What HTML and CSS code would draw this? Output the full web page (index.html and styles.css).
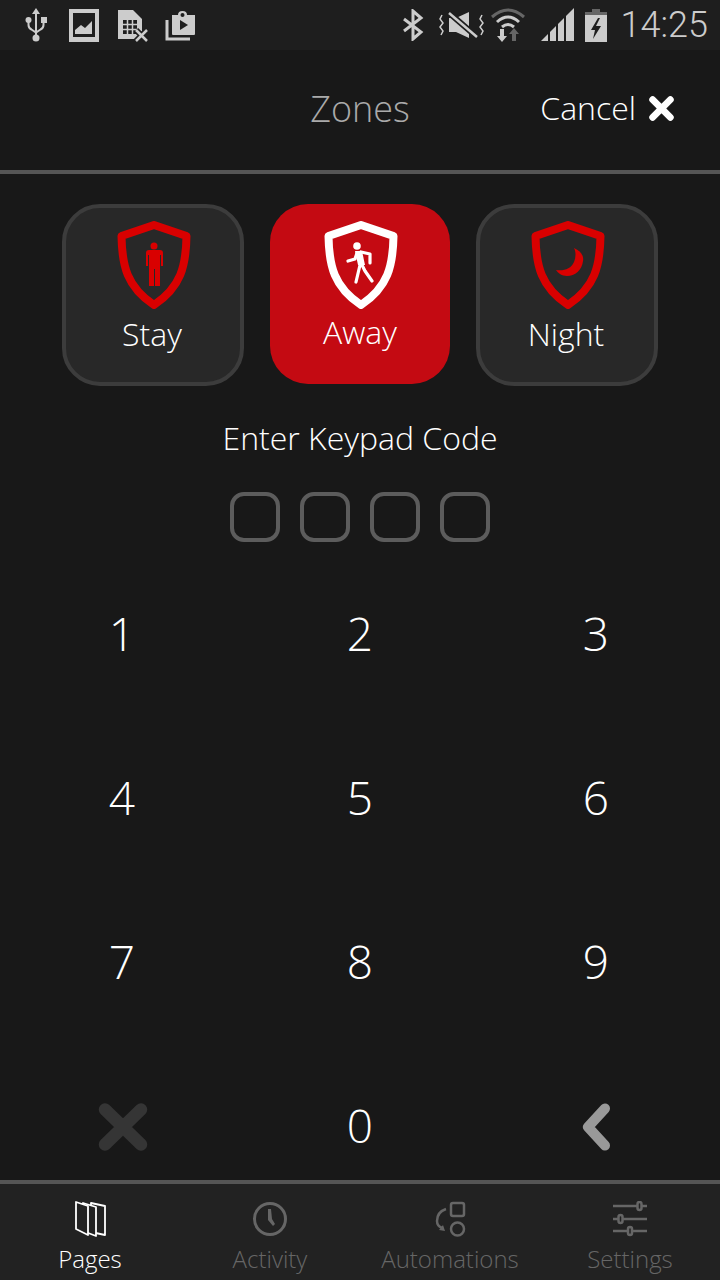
FILE: index.html
```html
<!DOCTYPE html>
<html lang="en">
<head>
    <meta charset="UTF-8">
    <meta name="viewport" content="width=device-width, initial-scale=1.0">
    <title>Zones</title>
    <link rel="stylesheet" href="styles.css">
</head>
<body>

    <!-- Status bar -->
    <div class="statusbar">
        <div class="status-left">
            <svg class="usb-icon" width="24" height="36" viewBox="0 0 24 36"><g fill="#ccc" stroke="none"><path d="M12 1l4 6h-3v21h-2V7H8z"/><circle cx="12" cy="31" r="3.500"/><circle cx="4.500" cy="13" r="3"/><rect x="17" y="10" width="6" height="6"/></g><path d="M4.500 14v4q0 3 3 4.500l4.500 3 4.500-3q3-1.500 3-4.500v-4" fill="none" stroke="#ccc" stroke-width="2"/></svg>
            <svg class="gallery-icon" width="30" height="33" viewBox="0 0 30 33"><rect width="30" height="33" fill="#ccc"/><rect x="4" y="4" width="22" height="24" fill="#1e1e1e"/><path d="M6 25v-4l6-5 4 3 7-7v13z" fill="#ccc"/></svg>
            <svg class="sim-icon" width="31" height="33" viewBox="0 0 31 33"><path d="M0 1h15l9 9v20H0z" fill="#ccc"/><rect x="5" y="11" width="14" height="14" fill="#1e1e1e"/><path d="M9.500 11v14M14.500 11v14M5 15.500h14M5 20.500h14" stroke="#ccc" stroke-width="1.500"/><path d="M18 21l11 11M29 21L18 32" stroke="#1e1e1e" stroke-width="6"/><path d="M18 21l11 11M29 21L18 32" stroke="#ccc" stroke-width="2.500"/></svg>
            <svg class="store-icon" width="31" height="31" viewBox="0 0 31 31"><path d="M2 10v19h23" fill="none" stroke="#ccc" stroke-width="3"/><path d="M7 5h6q0-4 4.500-4t4.500 4h8v19q0 1-1 1H8q-1 0-1-1z" fill="#ccc"/><circle cx="17.500" cy="5" r="2" fill="#1e1e1e"/><path d="M15 10l8 5-8 5z" fill="#1e1e1e"/></svg>
        </div>
        <div class="status-right">
            <svg class="bt-icon" width="22" height="32" viewBox="0 0 22 32"><path d="M2 10l17 13-8 7V2l8 7L2 22" fill="none" stroke="#ccc" stroke-width="3"/></svg>
            <svg class="mute-icon" width="46" height="28" viewBox="0 0 46 28"><path d="M10 7h7l13-6v26l-13-6h-7z" fill="#ccc"/><path d="M9 1l29 25" stroke="#1e1e1e" stroke-width="6"/><path d="M10 2l28 24" stroke="#ccc" stroke-width="2.500"/><path d="M3 4L1 8l3 4-3 4 3 4-2 4M43 4l-2 4 3 4-3 4 3 4-2 4" fill="none" stroke="#ccc" stroke-width="1.500"/></svg>
            <svg class="wifi-icon" width="34" height="36" viewBox="0 0 34 36"><path d="M1 10Q17-4 33 10" fill="none" stroke="#666" stroke-width="3"/><path d="M6 15Q17 5 28 15" fill="none" stroke="#ccc" stroke-width="3"/><path d="M11 20q6-5 12 0" fill="none" stroke="#ccc" stroke-width="3"/><path d="M11 35l-5-6h3v-7h4v7h3z" fill="#ccc"/><path d="M23 21l5 6h-3v7h-4v-7h-3z" fill="#666"/></svg>
            <svg class="signal-icon" width="34" height="34" viewBox="0 0 34 34"><path d="M0 33L33 0v33z" fill="#ccc"/><path d="M8 18v16M16 10v24M24 2v32" stroke="#1e1e1e" stroke-width="2"/></svg>
            <svg class="battery-icon" width="22" height="33" viewBox="0 0 22 33"><path d="M7 0h8v3h7v6H0V3h7z" fill="#666"/><path d="M0 6h22v27H0z" fill="#ccc"/><path d="M13 9L6 21h4l-2 9 8-13h-5l4-8z" fill="#1e1e1e"/></svg>
            <span class="clock">14:25</span>
        </div>
    </div>

    <!-- Title -->
    <div class="titlebar">
        <span class="title">Zones</span>
        <div class="cancel">
            <span>Cancel</span>
            <svg width="25" height="25" viewBox="0 0 24 24"><path d="M3.500 3.500l17 17M20.500 3.500l-17 17" stroke="#fff" stroke-width="6.500" stroke-linecap="round"/></svg>
        </div>
    </div>

    <!-- Arming modes -->
    <div class="modes">
        <div class="mode">
            <svg width="74" height="88" viewBox="0 0 74 88"><path d="M37 4L69.500 15C69 45 64 66 37 84 10 66 5 45 4.500 15z" fill="none" stroke="#d90000" stroke-width="8" stroke-linejoin="round"/><circle cx="37" cy="25" r="3.500" fill="#d90000"/><path d="M32 29h11q3 0 3 3v13h-2V34h-1v31h-5V48h-1v17h-5V34h-1v11h-2V32q0-3 3-3z" fill="#d90000"/></svg>
            <span>Stay</span>
        </div>
        <div class="mode mode-active">
            <svg width="74" height="88" viewBox="0 0 74 88"><path d="M37 4L69.500 15C69 45 64 66 37 84 10 66 5 45 4.500 15z" fill="none" stroke="#fff" stroke-width="8" stroke-linejoin="round"/><circle cx="33" cy="25" r="3.800" fill="#fff"/><path d="M31 30h7l3 14h-7z" fill="#fff"/><path d="M24 40l7-2 2-6M37 31l9 2v9M36 44l-4 17M38 44l3 6 7 10" fill="none" stroke="#fff" stroke-width="3.200" stroke-linecap="round" stroke-linejoin="round"/></svg>
            <span>Away</span>
        </div>
        <div class="mode">
            <svg width="74" height="88" viewBox="0 0 74 88"><path d="M37 4L69.500 15C69 45 64 66 37 84 10 66 5 45 4.500 15z" fill="none" stroke="#d90000" stroke-width="8" stroke-linejoin="round"/><path d="M43 27C50 30 53 35 52 40 51 49 44 55 36 55 31 55 27 52 25 49 33 50 40 48 43 41 45 36 45 31 43 27z" fill="#d90000"/></svg>
            <span>Night</span>
        </div>
    </div>

    <div class="prompt">Enter Keypad Code</div>

    <div class="code-boxes">
        <div class="code-box"></div>
        <div class="code-box"></div>
        <div class="code-box"></div>
        <div class="code-box"></div>
    </div>

    <!-- Keypad -->
    <div class="keypad">
        <div class="key">1</div>
        <div class="key">2</div>
        <div class="key">3</div>
        <div class="key">4</div>
        <div class="key">5</div>
        <div class="key">6</div>
        <div class="key">7</div>
        <div class="key">8</div>
        <div class="key">9</div>
        <div class="key"><svg class="clear-icon" width="50" height="48" viewBox="0 0 50 48"><path d="M7 6.500l36 35M43 6.500l-36 35" stroke="#353535" stroke-width="12.500" stroke-linecap="round"/></svg></div>
        <div class="key">0</div>
        <div class="key"><svg width="30" height="48" viewBox="0 0 30 48"><path d="M24 5.500L7 24l17 18.500" fill="none" stroke="#999" stroke-width="10" stroke-linecap="round" stroke-linejoin="round"/></svg></div>
    </div>

    <!-- Tabs -->
    <div class="tabbar">
        <div class="tab tab-active">
            <svg width="32" height="36" viewBox="0 0 32 36"><g fill="#222" stroke="#fff" stroke-width="1.800" stroke-linejoin="round"><path d="M17 2l14 3v29l-14-3z"/><path d="M9 2l13 4v29L9 30z"/><path d="M2 1l12 4v29L2 28z"/></g></svg>
            <span>Pages</span>
        </div>
        <div class="tab">
            <svg width="36" height="36" viewBox="0 0 36 36"><circle cx="18" cy="18" r="15.500" fill="none" stroke="#666" stroke-width="3"/><path d="M16 8h3l1 10 3 5-2 2-5-6z" fill="#666"/></svg>
            <span>Activity</span>
        </div>
        <div class="tab">
            <svg width="34" height="36" viewBox="0 0 34 36"><g fill="none" stroke="#666" stroke-width="2.500"><rect x="18" y="2" width="13" height="13" rx="2"/><circle cx="24.500" cy="28" r="6.500"/><path d="M13 8q-9 3-9 12 0 5 5 7"/></g><path d="M12 30l-6-1 4-5z" fill="#666"/></svg>
            <span>Automations</span>
        </div>
        <div class="tab">
            <svg width="36" height="36" viewBox="0 0 36 36"><g stroke="#666" stroke-width="2.500" fill="#222"><path d="M1 5h34M1 18h34M1 30h34"/><rect x="25.500" y="1" width="4" height="8" rx="2"/><rect x="6.500" y="14" width="4" height="8" rx="2"/><rect x="16" y="26" width="4" height="8" rx="2"/></g></svg>
            <span>Settings</span>
        </div>
    </div>

</body>
</html>
```
FILE: styles.css
```css
body {
    font-family: 'Open Sans', sans-serif;
    font-weight: 300;
    background-color: #181818;
    color: #fff;
    margin: 0;
    padding: 0;
    width: 720px;
    height: 1280px;
    overflow: hidden;
    display: flex;
    flex-direction: column;
}

.statusbar {
    height: 50px;
    background-color: #1e1e1e;
    display: flex;
    align-items: center;
    justify-content: space-between;
    padding: 0 12px 0 24px;
    flex-shrink: 0;
}

.status-left,
.status-right {
    display: flex;
    align-items: center;
}

.status-left {
    gap: 18px;
}

.status-right {
    gap: 6px;
}

.gallery-icon {
    margin-left: 3px;
}

.sim-icon {
    margin-left: 1px;
}

.store-icon {
    margin-left: -2px;
}

.bt-icon {
    margin-right: 1px;
}

.mute-icon {
    margin-left: 8px;
}

.signal-icon {
    margin-left: 10px;
}

.battery-icon {
    margin-left: 4px;
}

.clock {
    font-family: 'Roboto', sans-serif;
    font-weight: 300;
    font-size: 36px;
    color: #ccc;
    margin-left: 8px;
}

.titlebar {
    height: 120px;
    border-bottom: 4px solid #555;
    display: flex;
    align-items: center;
    justify-content: center;
    position: relative;
    flex-shrink: 0;
}

.title {
    font-size: 36px;
    color: #aaa;
    padding-bottom: 4px;
}

.cancel {
    position: absolute;
    right: 46px;
    top: 40px;
    display: flex;
    align-items: center;
    gap: 13px;
    font-size: 32px;
    line-height: 36px;
}

.modes {
    display: flex;
    justify-content: center;
    align-items: flex-start;
    gap: 26px;
    margin-top: 30px;
}

.mode {
    width: 182px;
    height: 182px;
    box-sizing: border-box;
    border: 4px solid #3c3c3c;
    border-radius: 38px;
    background-color: #282828;
    display: flex;
    flex-direction: column;
    align-items: center;
    padding-top: 13px;
    font-size: 32px;
    line-height: 40px;
}

.mode svg {
    margin-left: 2px;
}

.mode span {
    margin-top: 5px;
    margin-right: 2px;
}

.mode-active {
    width: 180px;
    height: 180px;
    border: none;
    background-color: #c40a12;
    padding-top: 17px;
}

.mode-active span {
    margin-top: 3px;
    margin-right: 0;
}

.prompt {
    text-align: center;
    font-size: 32px;
    line-height: 40px;
    margin-top: 32px;
}

.code-boxes {
    display: flex;
    justify-content: center;
    gap: 20px;
    margin-top: 34px;
}

.code-box {
    width: 50px;
    height: 50px;
    box-sizing: border-box;
    border: 4px solid #5c5c5c;
    border-radius: 14px;
}

.keypad {
    display: grid;
    grid-template-columns: 238px 238px 234px;
    grid-auto-rows: 164px;
    padding: 0 3px;
    margin-top: 9px;
}

.key {
    display: flex;
    align-items: center;
    justify-content: center;
    font-size: 46px;
}

.key svg {
    margin-top: 4px;
}

.key .clear-icon {
    margin-left: 2px;
}

.tabbar {
    position: absolute;
    left: 0;
    right: 0;
    bottom: 0;
    height: 96px;
    border-top: 4px solid #555;
    background-color: #222;
    display: grid;
    grid-template-columns: repeat(4, 180px);
}

.tab {
    display: flex;
    flex-direction: column;
    align-items: center;
    padding-top: 17px;
    font-size: 24px;
    line-height: 32px;
    color: #666;
}

.tab span {
    margin-top: 6px;
}

.tab-active {
    color: #fff;
}
```
